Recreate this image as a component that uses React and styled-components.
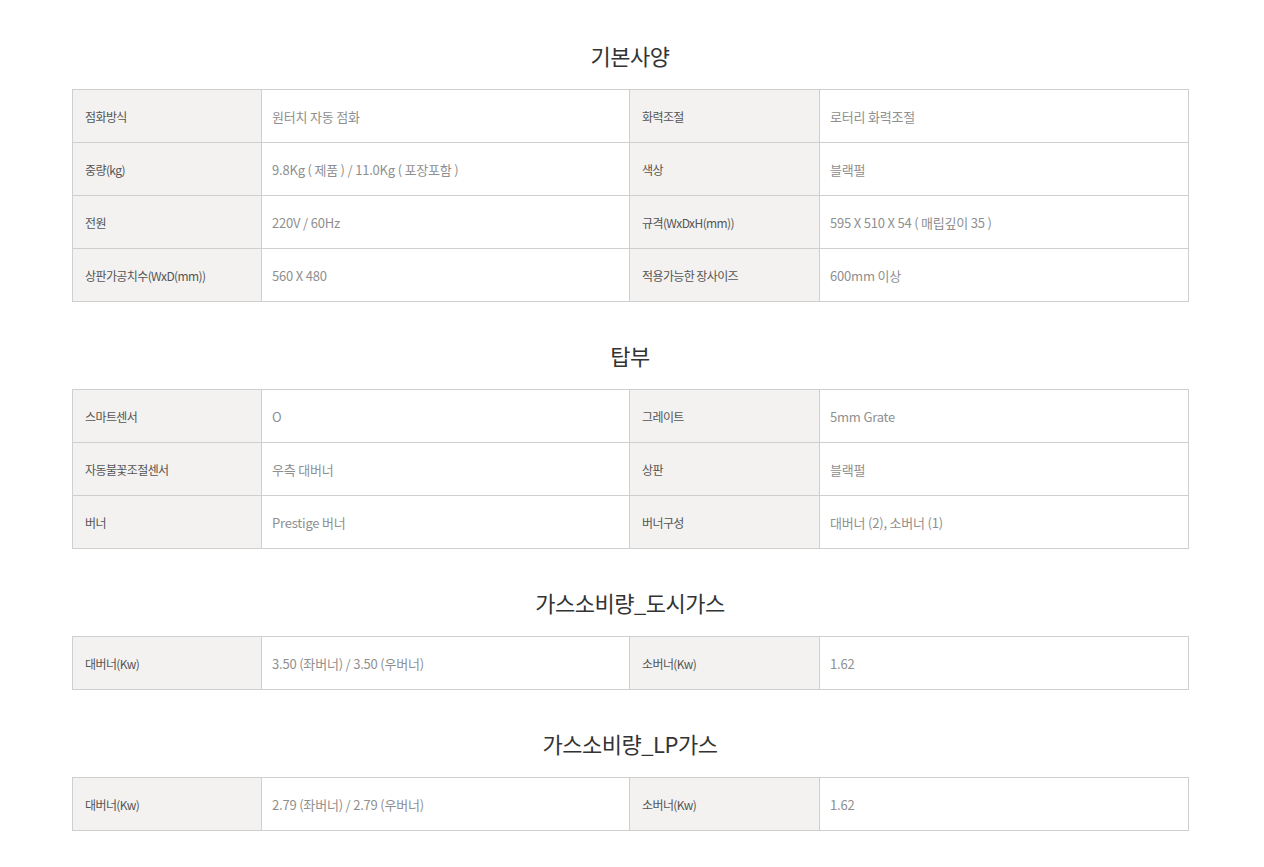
import React from "react";
import styled, { createGlobalStyle } from "styled-components";

const GlobalStyle = createGlobalStyle`
  html, body {
    margin: 0;
    padding: 0;
    background: #fff;
  }
  body {
    font-family: "Noto Sans CJK KR", "Noto Sans", sans-serif;
  }
`;

const Page = styled.div`
  padding: 40px 0 38px 72px;
`;

const Section = styled.section`
  width: 1116px;
  & + & {
    margin-top: 38px;
  }
`;

const Title = styled.h2`
  margin: 0 0 19px;
  height: 30px;
  line-height: 30px;
  text-align: center;
  font-size: 22px;
  font-weight: 400;
  color: #333;
  letter-spacing: -0.5px;
`;

const Table = styled.table`
  width: 1116px;
  table-layout: fixed;
  border-collapse: collapse;
  border: 1px solid #cfcfcf;
`;

const Cell = styled.td`
  height: 53px;
  padding: 0 0 0 ${(p) => (p.$label ? "12px" : "10px")};
  border: 1px solid #cfcfcf;
  background: ${(p) => (p.$label ? "#f3f2f0" : "#fff")};
  color: ${(p) => (p.$label ? "#555" : "#8f8f8f")};
  font-size: ${(p) => (p.$label ? "12px" : "13px")};
  letter-spacing: ${(p) => (p.$label ? "-0.6px" : "-0.2px")};
  vertical-align: middle;
  white-space: nowrap;
  box-sizing: border-box;
`;

const sections = [
  {
    title: "기본사양",
    rows: [
      ["점화방식", "원터치 자동 점화", "화력조절", "로터리 화력조절"],
      ["중량(kg)", "9.8Kg ( 제품 ) / 11.0Kg ( 포장포함 )", "색상", "블랙펄"],
      ["전원", "220V / 60Hz", "규격(WxDxH(mm))", "595 X 510 X 54 ( 매립깊이 35 )"],
      ["상판가공치수(WxD(mm))", "560 X 480", "적용가능한 장사이즈", "600mm 이상"],
    ],
  },
  {
    title: "탑부",
    rows: [
      ["스마트센서", "O", "그레이트", "5mm Grate"],
      ["자동불꽃조절센서", "우측 대버너", "상판", "블랙펄"],
      ["버너", "Prestige 버너", "버너구성", "대버너 (2), 소버너 (1)"],
    ],
  },
  {
    title: "가스소비량_도시가스",
    rows: [["대버너(Kw)", "3.50 (좌버너) / 3.50 (우버너)", "소버너(Kw)", "1.62"]],
  },
  {
    title: "가스소비량_LP가스",
    rows: [["대버너(Kw)", "2.79 (좌버너) / 2.79 (우버너)", "소버너(Kw)", "1.62"]],
  },
];

const SpecTable = ({ rows }) => (
  <Table>
    <colgroup>
      <col style={{ width: 189 }} />
      <col style={{ width: 368 }} />
      <col style={{ width: 190 }} />
      <col style={{ width: 369 }} />
    </colgroup>
    <tbody>
      {rows.map((r, i) => (
        <tr key={i}>
          <Cell $label>{r[0]}</Cell>
          <Cell>{r[1]}</Cell>
          <Cell $label>{r[2]}</Cell>
          <Cell>{r[3]}</Cell>
        </tr>
      ))}
    </tbody>
  </Table>
);

const App = () => (
  <>
    <GlobalStyle />
    <Page>
      {sections.map((s) => (
        <Section key={s.title}>
          <Title>{s.title}</Title>
          <SpecTable rows={s.rows} />
        </Section>
      ))}
    </Page>
  </>
);

export default App;
